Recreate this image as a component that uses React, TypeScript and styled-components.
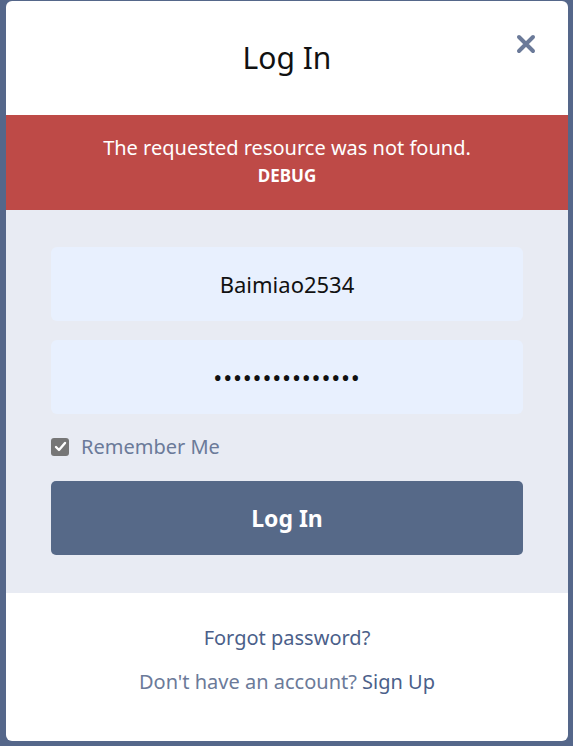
import styled, { createGlobalStyle } from 'styled-components';

const GlobalStyle = createGlobalStyle`
  html, body {
    margin: 0;
    padding: 0;
    background-color: #55678a;
  }
  body {
    font-family: 'Noto Sans', 'Open Sans', sans-serif;
  }
`;

const Backdrop = styled.div`
  width: 573px;
  height: 746px;
  padding: 1px 5px 5px 6px;
  box-sizing: border-box;
  background-color: #55678a;
`;

const Modal = styled.div`
  background-color: white;
  border-radius: 6px;
  overflow: hidden;
  height: 740px;
  display: flex;
  flex-direction: column;
`;

const Header = styled.div`
  position: relative;
  height: 114px;
  display: flex;
  align-items: center;
  justify-content: center;
`;

const Title = styled.h1`
  margin: 0;
  margin-top: -2px;
  font-size: 30px;
  font-weight: 400;
  color: #111;
`;

const CloseButton = styled.button`
  position: absolute;
  top: 31px;
  right: 30px;
  width: 24px;
  height: 24px;
  padding: 0;
  border: none;
  background: none;
  cursor: pointer;
`;

const ErrorBanner = styled.div`
  background-color: #be4a47;
  color: white;
  height: 95px;
  box-sizing: border-box;
  padding-top: 18px;
  text-align: center;
  font-size: 20px;
  line-height: 29px;
`;

const Debug = styled.div`
  font-weight: 700;
  font-size: 17px;
  line-height: 28px;
`;

const Form = styled.form`
  background-color: #e8ebf3;
  padding: 37px 45px 38px;
  display: flex;
  flex-direction: column;
`;

const Input = styled.input<{ $secret?: boolean }>`
  height: 74px;
  box-sizing: border-box;
  padding: 0 12px;
  border: none;
  border-radius: 6px;
  background-color: #e8f0fe;
  text-align: center;
  font-family: inherit;
  font-size: ${(p) => (p.$secret ? '24px' : '22px')};
  letter-spacing: ${(p) => (p.$secret ? '0.8px' : 'normal')};
  color: #111;
  margin-bottom: 19px;
  outline: none;
`;

const CheckRow = styled.label`
  display: flex;
  align-items: center;
  gap: 12px;
  font-size: 20px;
  color: #6b7a99;
  margin-bottom: 21px;
`;

const CheckBox = styled.span`
  width: 18px;
  height: 18px;
  border-radius: 3px;
  background-color: #767676;
  display: flex;
  align-items: center;
  justify-content: center;
`;

const SubmitButton = styled.button`
  height: 74px;
  border: none;
  border-radius: 5px;
  background-color: #566988;
  color: white;
  font-family: inherit;
  font-size: 23px;
  font-weight: 700;
  cursor: pointer;
`;

const Footer = styled.div`
  flex: 1;
  display: flex;
  flex-direction: column;
  align-items: center;
  padding-top: 31px;
  gap: 17px;
  font-size: 20px;
  color: #6b7a99;
`;

const Link = styled.a`
  color: #4b5f8a;
  text-decoration: none;
`;

export default function App() {
  return (
    <Backdrop>
      <GlobalStyle />
      <Modal>
        <Header>
          <Title>Log In</Title>
          <CloseButton aria-label="Close">
            <svg width="24" height="24" viewBox="0 0 24 24">
              <path d="M5 5 L19 19 M19 5 L5 19" stroke="#6b7a99" strokeWidth="4" strokeLinecap="round" />
            </svg>
          </CloseButton>
        </Header>
        <ErrorBanner>
          The requested resource was not found.
          <Debug>DEBUG</Debug>
        </ErrorBanner>
        <Form onSubmit={(e) => e.preventDefault()}>
          <Input type="text" defaultValue="Baimiao2534" />
          <Input $secret type="password" defaultValue="passwordpasswor" />
          <CheckRow>
            <CheckBox>
              <svg width="13" height="13" viewBox="0 0 13 13">
                <path d="M2 7 L5 10 L11 3" stroke="white" strokeWidth="2.4" fill="none" strokeLinecap="round" strokeLinejoin="round" />
              </svg>
            </CheckBox>
            Remember Me
          </CheckRow>
          <SubmitButton type="submit">Log In</SubmitButton>
        </Form>
        <Footer>
          <Link href="#">Forgot password?</Link>
          <div>
            Don't have an account? <Link href="#">Sign Up</Link>
          </div>
        </Footer>
      </Modal>
    </Backdrop>
  );
}
